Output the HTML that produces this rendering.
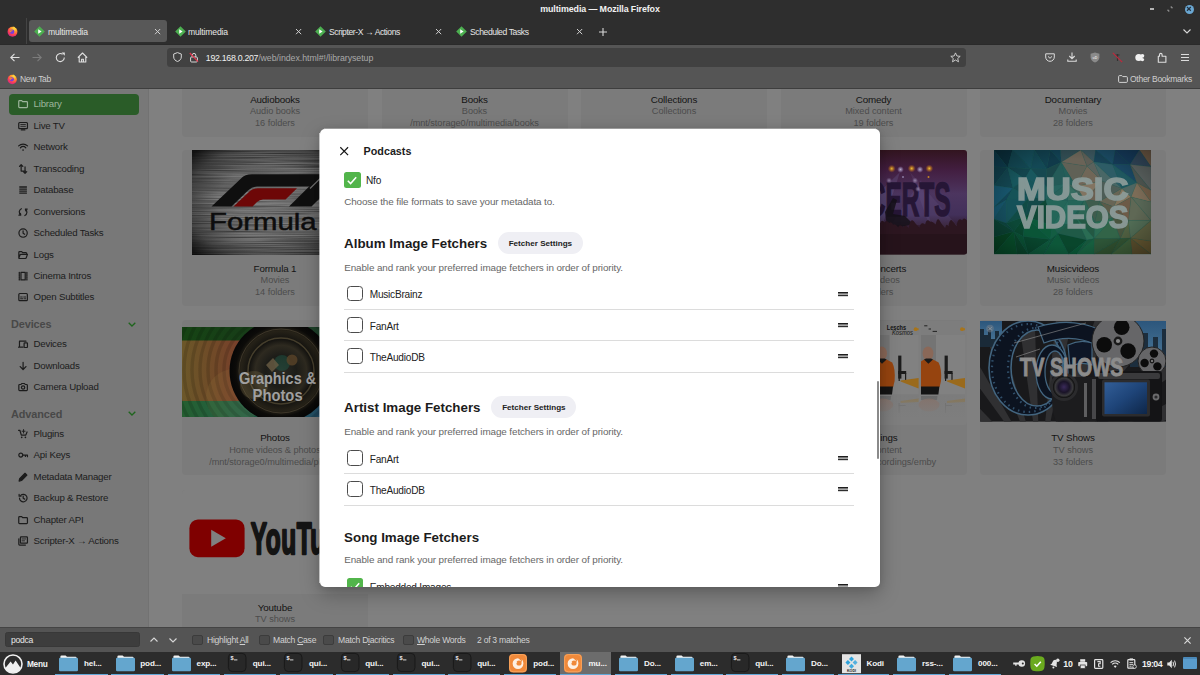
<!DOCTYPE html>
<html lang="en">
<head>
<meta charset="utf-8">
<title>multimedia — Mozilla Firefox</title>
<style>
*{box-sizing:border-box;margin:0;padding:0}
html,body{width:1200px;height:675px;overflow:hidden;background:#808080}
body{font-family:"Liberation Sans",sans-serif;position:relative;color:#fff}
.abs{position:absolute}
svg{position:absolute;overflow:visible}
/* ---------- browser chrome ---------- */
#titlebar{left:0;top:0;width:1200px;height:45px;background:#2e2e2e;border-bottom:1px solid #2a2a2a}
#title{left:0;top:3px;width:1200px;text-align:center;font-size:8.9px;letter-spacing:-0.1px;font-weight:bold;color:#f2f2f2;line-height:12px}
.tab{top:20px;height:23px;border-radius:4px;font-size:9px;line-height:23px;color:#e4e4e4}
.tab span{position:absolute;left:18px;top:0;white-space:nowrap}
#tab1{left:29px;width:138.3px;background:#585858;height:22px;border-radius:3px}
#navbar{left:0;top:45px;width:1200px;height:43.8px;background:#555}
#urlbar{left:167.3px;top:47.6px;width:799px;height:19.6px;border-radius:3.5px;background:#414141}
#url{left:205.8px;top:51.8px;font-size:8.8px;letter-spacing:-0.04px;line-height:13px;color:#a9a9a9;white-space:nowrap}
#url b{font-weight:normal;color:#f0f0f0;letter-spacing:-0.3px}
.bm{top:73.3px;font-size:8.5px;letter-spacing:-0.27px;line-height:12px;color:#cfcfcf;white-space:nowrap}
#chromeline{left:0;top:87.7px;width:1200px;height:1.1px;background:#3e3e3e}
/* ---------- page ---------- */
#sidebar{left:0;top:88px;width:148.6px;height:540px;background:#787878}
#sideborder{left:148px;top:88px;width:1px;height:540px;background:#727272}
#libsel{left:9px;top:94px;width:130px;height:21px;border-radius:4px;background:#2a5c28}
.nav{left:33.6px;font-size:9.7px;letter-spacing:-0.22px;line-height:14px;color:#1c1c1c;white-space:nowrap}
.navh{left:11px;font-size:10.9px;font-weight:bold;line-height:14px;color:#484848;white-space:nowrap;letter-spacing:-0.1px}
.card{background:#7b7b7b;border-radius:4px}
.ct{font-size:9.8px;letter-spacing:-0.15px;line-height:13px;color:#141414;text-align:center;white-space:nowrap;width:186px}
.cs{font-size:9.2px;letter-spacing:-0.05px;line-height:12px;color:#4c4c4c;text-align:center;white-space:nowrap;width:186px}
/* ---------- modal ---------- */
#modal{left:320px;top:129px;width:560px;height:458px;background:#fff;border-radius:5px;box-shadow:0 7px 20px rgba(0,0,0,.27),0 1px 6px rgba(0,0,0,.1);overflow:hidden;color:#1b1b1b}
.h2{margin-top:0.6px;left:24.1px;font-size:13.35px;font-weight:bold;line-height:18px;color:#1c1c1c;white-space:nowrap}
.pill{margin-left:0.4px;margin-top:0.2px;padding-top:0.9px;height:22px;width:85px;border-radius:11px;background:#efeff4;font-size:8.1px;font-weight:bold;line-height:22px;text-align:center;color:#222}
.desc{margin-top:-0.15px;left:24.2px;font-size:9.9px;letter-spacing:-0.105px;line-height:13px;color:#666;white-space:nowrap}
.cb{left:27.1px;width:15.8px;height:15.8px;border:1.4px solid #4c4c4c;border-radius:3.5px;background:#fff}
.lbl{margin-top:0.25px;left:49.7px;font-size:10.1px;letter-spacing:-0.22px;line-height:13px;color:#222;white-space:nowrap}
.sep{left:24.1px;width:510px;height:1px;background:#dcdcdc}
.hdl{left:518.6px;margin-top:0.4px;width:10px;height:4.5px;border-top:1.3px solid #1a1a1a;border-bottom:1.3px solid #555}
/* ---------- find bar + panel ---------- */
#findbar{left:0;top:627px;width:1200px;height:26px;background:#545454;border-top:1px solid #444}
#findinput{left:5px;top:632px;width:134.6px;height:15.4px;border-radius:2.5px;background:#3d3d3d;border:1px solid #383838}
.ft{top:634px;font-size:8.6px;letter-spacing:-0.27px;line-height:12px;color:#d2d2d2;white-space:nowrap}
.fcb{top:635.2px;width:10.4px;height:9.8px;border:1px solid #3c3c3c;background:#4a4a4a;border-radius:2px;margin-left:-0.6px}
#panel{left:0;top:652.2px;width:1200px;height:23px;background:#2c2c2c}
.tk{top:0;height:22.8px;width:52.5px}
.tk i{position:absolute;left:0;bottom:0;width:52.5px;height:1.4px;background:#62a8d8}
.tk span{position:absolute;left:29px;top:5.7px;font-size:8.1px;font-weight:bold;line-height:12px;color:#f4f4f4;white-space:nowrap;letter-spacing:-0.12px}
</style>
</head>
<body>
<!-- PAGE BACKGROUND CONTENT -->
<div id="page">
<!-- row 1 -->
<div class="abs card" style="left:182.0px;top:40px;width:186px;height:96.9px"></div>
<div class="abs ct" style="left:182.0px;top:92.5px">Audiobooks</div>
<div class="abs cs" style="left:182.0px;top:105px">Audio books</div>
<div class="abs cs" style="left:182.0px;top:117px">16 folders</div>
<div class="abs card" style="left:381.5px;top:40px;width:186px;height:96.9px"></div>
<div class="abs ct" style="left:381.5px;top:92.5px">Books</div>
<div class="abs cs" style="left:381.5px;top:105px">Books</div>
<div class="abs cs" style="left:381.5px;top:117px">/mnt/storage0/multimedia/books</div>
<div class="abs card" style="left:581.0px;top:40px;width:186px;height:96.9px"></div>
<div class="abs ct" style="left:581.0px;top:92.5px">Collections</div>
<div class="abs cs" style="left:581.0px;top:105px">Collections</div>
<div class="abs card" style="left:780.5px;top:40px;width:186px;height:96.9px"></div>
<div class="abs ct" style="left:780.5px;top:92.5px">Comedy</div>
<div class="abs cs" style="left:780.5px;top:105px">Mixed content</div>
<div class="abs cs" style="left:780.5px;top:117px">19 folders</div>
<div class="abs card" style="left:980.0px;top:40px;width:186px;height:96.9px"></div>
<div class="abs ct" style="left:980.0px;top:92.5px">Documentary</div>
<div class="abs cs" style="left:980.0px;top:105px">Movies</div>
<div class="abs cs" style="left:980.0px;top:117px">28 folders</div>
<!-- row 2 -->
<div class="abs card" style="left:182.0px;top:149.5px;width:186px;height:156.5px"></div>
<div class="abs ct" style="left:182.0px;top:261.5px">Formula 1</div>
<div class="abs cs" style="left:182.0px;top:274px">Movies</div>
<div class="abs cs" style="left:182.0px;top:286px">14 folders</div>
<div class="abs card" style="left:381.5px;top:149.5px;width:186px;height:156.5px"></div>
<div class="abs ct" style="left:381.5px;top:261.5px">Movies</div>
<div class="abs cs" style="left:381.5px;top:274px">Movies</div>
<div class="abs cs" style="left:381.5px;top:286px">12 folders</div>
<div class="abs card" style="left:581.0px;top:149.5px;width:186px;height:156.5px"></div>
<div class="abs ct" style="left:581.0px;top:261.5px">Music</div>
<div class="abs cs" style="left:581.0px;top:274px">Music</div>
<div class="abs cs" style="left:581.0px;top:286px">9 folders</div>
<div class="abs card" style="left:780.5px;top:149.5px;width:186px;height:156.5px"></div>
<div class="abs ct" style="left:780.5px;top:261.5px">Music Concerts</div>
<div class="abs cs" style="left:780.5px;top:274px">Music videos</div>
<div class="abs cs" style="left:780.5px;top:286px">21 folders</div>
<div class="abs card" style="left:980.0px;top:149.5px;width:186px;height:156.5px"></div>
<div class="abs ct" style="left:980.0px;top:261.5px">Musicvideos</div>
<div class="abs cs" style="left:980.0px;top:274px">Music videos</div>
<div class="abs cs" style="left:980.0px;top:286px">28 folders</div>
<!-- Formula 1 thumbnail -->
<svg class="abs" style="left:192px;top:150px" width="157" height="105" viewBox="0 0 157 105">
<defs>
<radialGradient id="f1bg" cx="0.5" cy="0.5" r="0.68"><stop offset="0" stop-color="#868686"/><stop offset="0.5" stop-color="#777"/><stop offset="0.8" stop-color="#4a4a4a"/><stop offset="1" stop-color="#151515"/></radialGradient>
<filter id="f1tx" x="0" y="0" width="100%" height="100%"><feTurbulence type="fractalNoise" baseFrequency="0.012 0.9" numOctaves="2" seed="4" result="n"/><feColorMatrix type="matrix" values="0 0 0 0 0  0 0 0 0 0  0 0 0 0 0  0.9 0 0 0 -0.28"/></filter>
<clipPath id="f1clip"><rect width="157" height="105"/></clipPath>
</defs>
<g clip-path="url(#f1clip)">
<rect width="157" height="105" fill="url(#f1bg)"/>
<rect width="157" height="105" filter="url(#f1tx)"/>
<!-- F1 logo -->
<path d="M19.5 56.5 L49 28.5 Q53 24.3 60 24.3 L133 24.3 L121 36.5 L65 36.5 Q60 36.5 56 40.5 L39.5 56.5Z" fill="#0f0f0f"/>
<path d="M41.5 56.5 L58 41 Q61 38.3 66 38.3 L105 38.3 L93.5 49.5 L71 49.5 Q67.5 49.5 65 52 L60.5 56.5Z" fill="#6d0707"/>
<path d="M97 56.5 L129.5 24.3 L152 24.3 L119.5 56.5Z" fill="#0f0f0f"/>
<path d="M118 38.5 L128 28.6" stroke="#707070" stroke-width="1.2"/>
<text x="17" y="79.6" font-family="Liberation Sans,sans-serif" font-size="24.5" fill="#0d0d0d" stroke="#0d0d0d" stroke-width="0.5" textLength="132" lengthAdjust="spacingAndGlyphs">Formula 1</text>
</g>
</svg>
<!-- Concerts thumbnail -->
<svg class="abs" style="left:781px;top:150px" width="186" height="104.5" viewBox="0 0 186 104.5">
<defs>
<linearGradient id="cobg" x1="0" y1="0" x2="0" y2="1"><stop offset="0" stop-color="#32141f"/><stop offset="0.2" stop-color="#431f42"/><stop offset="0.42" stop-color="#4c355f"/><stop offset="0.62" stop-color="#42305a"/><stop offset="0.72" stop-color="#331e34"/><stop offset="1" stop-color="#211018"/></linearGradient>
<radialGradient id="coy"><stop offset="0" stop-color="#f0c040"/><stop offset="0.4" stop-color="#c08020" stop-opacity="0.8"/><stop offset="1" stop-color="#a05020" stop-opacity="0"/></radialGradient>
<radialGradient id="cow"><stop offset="0" stop-color="#b8a8c8"/><stop offset="0.5" stop-color="#9080a8" stop-opacity="0.7"/><stop offset="1" stop-color="#806090" stop-opacity="0"/></radialGradient>
<clipPath id="coclip"><rect width="186" height="104.5" rx="3"/></clipPath>
</defs>
<g clip-path="url(#coclip)">
<rect width="186" height="104.5" fill="url(#cobg)"/>
<path d="M119 22 L60 80 L100 80Z" fill="#8a88c0" fill-opacity="0.18"/>
<path d="M129 22 L150 80 L180 80Z" fill="#8a78b0" fill-opacity="0.12"/>
<path d="M140 30 L110 75 L150 75Z" fill="#7a6ab0" fill-opacity="0.15"/>
<text x="169.5" y="66.3" text-anchor="end" font-family="Liberation Sans,sans-serif" font-weight="bold" font-size="48" fill="#261636" stroke="#261636" stroke-width="1.6" fill-opacity="1" textLength="137" lengthAdjust="spacingAndGlyphs">CONCERTS</text>
<g>
<circle cx="110.7" cy="18.7" r="4" fill="url(#coy)"/><circle cx="130.7" cy="18.5" r="4" fill="url(#coy)"/><circle cx="148.3" cy="18.5" r="4" fill="url(#coy)"/>
<circle cx="119.5" cy="19.5" r="3.4" fill="url(#cow)"/><circle cx="139" cy="19.5" r="3.4" fill="url(#cow)"/>
<circle cx="108" cy="30.5" r="3" fill="url(#cow)" opacity="0.7"/><circle cx="134" cy="30.5" r="3" fill="url(#cow)" opacity="0.7"/><circle cx="137" cy="39" r="3" fill="url(#cow)" opacity="0.7"/>
<circle cx="147.5" cy="27" r="1.6" fill="url(#coy)"/><circle cx="122" cy="27" r="1.4" fill="url(#cow)"/>
<circle cx="30" cy="18.7" r="4" fill="url(#coy)"/><circle cx="50" cy="18.5" r="4" fill="url(#coy)"/><circle cx="70" cy="18.5" r="4" fill="url(#coy)"/><circle cx="90" cy="19" r="3.4" fill="url(#cow)"/>
</g>
<path d="M104 62 L112 48 L116 50 L112 64 L124 66 L132 74 L116 78 L106 76Z" fill="#151018" fill-opacity="0.85"/>
<path d="M0 105 L0 76 Q1.5 70.4 3.7 74.4 Q5.2 70.8 7.8 74.8 Q9.3 66.5 12.7 70.5 Q14.2 72.7 15.7 76.7 Q17.2 67.9 19.5 71.9 Q21.0 69.8 25.5 73.8 Q27.0 69.8 31.0 73.8 Q32.5 67.2 35.9 71.2 Q37.4 72.9 40.8 76.9 Q42.3 71.9 45.4 75.9 Q46.9 66.5 50.4 70.5 Q51.9 70.7 55.7 74.7 Q57.2 66.2 59.6 70.2 Q61.1 69.8 65.2 73.8 Q66.7 73.0 70.4 77.0 Q71.9 73.4 75.5 77.4 Q77.0 72.4 79.7 76.4 Q81.2 73.5 84.0 77.5 Q85.5 66.8 89.6 70.8 Q91.1 67.7 93.1 71.7 Q94.6 69.5 99.0 73.5 Q100.5 68.4 103.8 72.4 Q105.3 69.1 108.4 73.1 Q109.9 70.7 112.4 74.7 Q113.9 73.2 117.2 77.2 Q118.7 73.4 122.2 77.4 Q123.7 73.9 127.8 77.9 Q129.3 67.3 132.8 71.3 Q134.3 73.7 138.4 77.7 Q139.9 70.6 144.1 74.6 Q145.6 67.7 149.2 71.7 Q150.7 70.6 154.7 74.6 Q156.2 66.5 158.6 70.5 Q160.1 73.9 164.1 77.9 Q165.6 72.4 167.4 76.4 Q168.9 67.2 171.6 71.2 Q173.1 72.2 175.5 76.2 Q177.0 66.4 181.1 70.4 Q182.6 66.4 186.0 70.4 Q187.5 68.6 191.1 72.6 L186 105Z" fill="#2c1620"/>
<rect y="84" width="186" height="21" fill="#1a0c12" fill-opacity="0.3"/>
</g>
</svg>
<!-- Musicvideos thumbnail -->
<svg class="abs" style="left:994.3px;top:150.2px" width="157" height="104.3" viewBox="0 0 157 104.3">
<defs><clipPath id="mvclip"><rect width="157" height="104.3"/></clipPath>
<radialGradient id="mvvig" cx="0.5" cy="0.5" r="0.75"><stop offset="0.55" stop-color="#000" stop-opacity="0"/><stop offset="1" stop-color="#000" stop-opacity="0.4"/></radialGradient></defs>
<g clip-path="url(#mvclip)">
<rect width="157" height="104.3" fill="#1a6a5a"/>
<g stroke-width="0.4" stroke="#2a6a64" stroke-opacity="0.3">
<path d="M0.0 0.0L18.5 0.0L13.7 17.5Z" fill="#0d3949"/><path d="M0.0 0.0L13.7 17.5L0.0 16.8Z" fill="#10465a"/><path d="M0.0 16.8L13.7 17.5L0.0 35.5Z" fill="#134756"/><path d="M13.7 17.5L19.0 38.3L0.0 35.5Z" fill="#164f5c"/><path d="M0.0 35.5L19.0 38.3L0.0 57.2Z" fill="#1b607a"/><path d="M19.0 38.3L12.6 49.8L0.0 57.2Z" fill="#164f63"/><path d="M0.0 57.2L12.6 49.8L0.0 69.1Z" fill="#1a5f79"/><path d="M12.6 49.8L12.5 73.2L0.0 69.1Z" fill="#18596c"/><path d="M0.0 69.1L12.5 73.2L19.8 81.4Z" fill="#104e47"/><path d="M0.0 69.1L19.8 81.4L0.0 87.0Z" fill="#0d4b3b"/><path d="M0.0 87.0L19.8 81.4L0.0 104.3Z" fill="#084e2a"/><path d="M19.8 81.4L23.2 104.3L0.0 104.3Z" fill="#095931"/><path d="M18.5 0.0L40.5 0.0L36.7 18.8Z" fill="#185968"/><path d="M18.5 0.0L36.7 18.8L13.7 17.5Z" fill="#165260"/><path d="M13.7 17.5L36.7 18.8L30.8 28.9Z" fill="#164e58"/><path d="M13.7 17.5L30.8 28.9L19.0 38.3Z" fill="#1b6169"/><path d="M19.0 38.3L30.8 28.9L35.2 46.9Z" fill="#18565c"/><path d="M19.0 38.3L35.2 46.9L12.6 49.8Z" fill="#1a5f65"/><path d="M12.6 49.8L35.2 46.9L12.5 73.2Z" fill="#195d66"/><path d="M35.2 46.9L31.2 66.4L12.5 73.2Z" fill="#13564f"/><path d="M12.5 73.2L31.2 66.4L19.8 81.4Z" fill="#0e533f"/><path d="M31.2 66.4L29.2 86.5L19.8 81.4Z" fill="#0b4f35"/><path d="M19.8 81.4L29.2 86.5L34.2 104.3Z" fill="#0c5a3b"/><path d="M19.8 81.4L34.2 104.3L23.2 104.3Z" fill="#0b4e32"/><path d="M40.5 0.0L56.4 0.0L52.6 19.1Z" fill="#144959"/><path d="M40.5 0.0L52.6 19.1L36.7 18.8Z" fill="#165361"/><path d="M36.7 18.8L52.6 19.1L52.3 36.7Z" fill="#1a535c"/><path d="M36.7 18.8L52.3 36.7L30.8 28.9Z" fill="#1d636c"/><path d="M30.8 28.9L52.3 36.7L35.2 46.9Z" fill="#1b6168"/><path d="M52.3 36.7L51.8 49.5L35.2 46.9Z" fill="#1f6466"/><path d="M35.2 46.9L51.8 49.5L31.2 66.4Z" fill="#175454"/><path d="M51.8 49.5L58.3 75.5L31.2 66.4Z" fill="#11523d"/><path d="M31.2 66.4L58.3 75.5L56.4 89.4Z" fill="#0e6643"/><path d="M31.2 66.4L56.4 89.4L29.2 86.5Z" fill="#0c613f"/><path d="M29.2 86.5L56.4 89.4L34.2 104.3Z" fill="#0a4f34"/><path d="M56.4 89.4L50.1 104.3L34.2 104.3Z" fill="#0f6040"/><path d="M56.4 0.0L66.5 0.0L67.2 12.2Z" fill="#154a5f"/><path d="M56.4 0.0L67.2 12.2L52.6 19.1Z" fill="#134355"/><path d="M52.6 19.1L67.2 12.2L52.3 36.7Z" fill="#1f5155"/><path d="M67.2 12.2L73.0 33.6L52.3 36.7Z" fill="#296865"/><path d="M52.3 36.7L73.0 33.6L51.8 49.5Z" fill="#2d726d"/><path d="M73.0 33.6L73.9 50.8L51.8 49.5Z" fill="#2e7068"/><path d="M51.8 49.5L73.9 50.8L58.3 75.5Z" fill="#2a7566"/><path d="M73.9 50.8L75.3 73.7L58.3 75.5Z" fill="#2c7a6a"/><path d="M58.3 75.5L75.3 73.7L63.8 83.4Z" fill="#226c57"/><path d="M58.3 75.5L63.8 83.4L56.4 89.4Z" fill="#166a4c"/><path d="M56.4 89.4L63.8 83.4L50.1 104.3Z" fill="#105b3e"/><path d="M63.8 83.4L74.7 104.3L50.1 104.3Z" fill="#0f6341"/><path d="M66.5 0.0L86.9 0.0L67.2 12.2Z" fill="#38575e"/><path d="M86.9 0.0L93.0 16.2L67.2 12.2Z" fill="#797163"/><path d="M67.2 12.2L93.0 16.2L82.1 36.3Z" fill="#6e6f62"/><path d="M67.2 12.2L82.1 36.3L73.0 33.6Z" fill="#2b6b66"/><path d="M73.0 33.6L82.1 36.3L90.6 49.4Z" fill="#477066"/><path d="M73.0 33.6L90.6 49.4L73.9 50.8Z" fill="#3d7b6e"/><path d="M73.9 50.8L90.6 49.4L75.3 73.7Z" fill="#2a7466"/><path d="M90.6 49.4L82.3 67.5L75.3 73.7Z" fill="#276a5c"/><path d="M75.3 73.7L82.3 67.5L63.8 83.4Z" fill="#286e5d"/><path d="M82.3 67.5L92.8 90.0L63.8 83.4Z" fill="#246751"/><path d="M63.8 83.4L92.8 90.0L74.7 104.3Z" fill="#0b5033"/><path d="M92.8 90.0L82.6 104.3L74.7 104.3Z" fill="#0b603c"/><path d="M86.9 0.0L101.6 0.0L99.9 12.1Z" fill="#43616a"/><path d="M86.9 0.0L99.9 12.1L93.0 16.2Z" fill="#6a6a61"/><path d="M93.0 16.2L99.9 12.1L108.2 30.9Z" fill="#67706a"/><path d="M93.0 16.2L108.2 30.9L82.1 36.3Z" fill="#807563"/><path d="M82.1 36.3L108.2 30.9L90.6 49.4Z" fill="#94856f"/><path d="M108.2 30.9L105.4 51.5L90.6 49.4Z" fill="#7a6e5d"/><path d="M90.6 49.4L105.4 51.5L101.0 72.3Z" fill="#486958"/><path d="M90.6 49.4L101.0 72.3L82.3 67.5Z" fill="#337360"/><path d="M82.3 67.5L101.0 72.3L100.2 88.6Z" fill="#28654d"/><path d="M82.3 67.5L100.2 88.6L92.8 90.0Z" fill="#307c5f"/><path d="M92.8 90.0L100.2 88.6L82.6 104.3Z" fill="#1b6244"/><path d="M100.2 88.6L100.1 104.3L82.6 104.3Z" fill="#1a6b47"/><path d="M101.6 0.0L121.2 0.0L118.7 14.6Z" fill="#1f5773"/><path d="M101.6 0.0L118.7 14.6L99.9 12.1Z" fill="#1c4d64"/><path d="M99.9 12.1L118.7 14.6L127.8 38.4Z" fill="#346975"/><path d="M99.9 12.1L127.8 38.4L108.2 30.9Z" fill="#547675"/><path d="M108.2 30.9L127.8 38.4L105.4 51.5Z" fill="#586a63"/><path d="M127.8 38.4L119.8 56.8L105.4 51.5Z" fill="#777461"/><path d="M105.4 51.5L119.8 56.8L118.6 68.3Z" fill="#686753"/><path d="M105.4 51.5L118.6 68.3L101.0 72.3Z" fill="#476f58"/><path d="M101.0 72.3L118.6 68.3L100.2 88.6Z" fill="#317a5e"/><path d="M118.6 68.3L126.4 88.6L100.2 88.6Z" fill="#397253"/><path d="M100.2 88.6L126.4 88.6L100.1 104.3Z" fill="#34603f"/><path d="M126.4 88.6L117.3 104.3L100.1 104.3Z" fill="#365a36"/><path d="M121.2 0.0L145.4 0.0L136.1 14.5Z" fill="#194268"/><path d="M121.2 0.0L136.1 14.5L118.7 14.6Z" fill="#1a4566"/><path d="M118.7 14.6L136.1 14.5L142.8 32.7Z" fill="#1f5272"/><path d="M118.7 14.6L142.8 32.7L127.8 38.4Z" fill="#24636d"/><path d="M127.8 38.4L142.8 32.7L137.1 47.0Z" fill="#597570"/><path d="M127.8 38.4L137.1 47.0L119.8 56.8Z" fill="#978469"/><path d="M119.8 56.8L137.1 47.0L134.6 70.5Z" fill="#7b6751"/><path d="M119.8 56.8L134.6 70.5L118.6 68.3Z" fill="#72654f"/><path d="M118.6 68.3L134.6 70.5L126.4 88.6Z" fill="#536047"/><path d="M134.6 70.5L136.5 88.1L126.4 88.6Z" fill="#5d6f4c"/><path d="M126.4 88.6L136.5 88.1L117.3 104.3Z" fill="#3a5f39"/><path d="M136.5 88.1L138.0 104.3L117.3 104.3Z" fill="#476c41"/><path d="M145.4 0.0L157.0 0.0L157.0 16.8Z" fill="#836a53"/><path d="M145.4 0.0L157.0 16.8L136.1 14.5Z" fill="#395369"/><path d="M136.1 14.5L157.0 16.8L157.0 40.3Z" fill="#69716f"/><path d="M136.1 14.5L157.0 40.3L142.8 32.7Z" fill="#5b635e"/><path d="M142.8 32.7L157.0 40.3L157.0 52.0Z" fill="#826c53"/><path d="M142.8 32.7L157.0 52.0L137.1 47.0Z" fill="#8e7c63"/><path d="M137.1 47.0L157.0 52.0L157.0 70.4Z" fill="#657662"/><path d="M137.1 47.0L157.0 70.4L134.6 70.5Z" fill="#6d7761"/><path d="M134.6 70.5L157.0 70.4L136.5 88.1Z" fill="#5d7b61"/><path d="M157.0 70.4L157.0 91.3L136.5 88.1Z" fill="#6b6f4a"/><path d="M136.5 88.1L157.0 91.3L157.0 104.3Z" fill="#77673b"/><path d="M136.5 88.1L157.0 104.3L138.0 104.3Z" fill="#6b5e36"/>
</g>
<rect width="157" height="104.3" fill="#000" fill-opacity="0.12"/><rect width="157" height="104.3" fill="url(#mvvig)"/>
<g font-family="Liberation Sans,sans-serif" font-weight="bold" font-size="31.6" fill="#8c9c9a" stroke="#8c9c9a" stroke-width="1.6" stroke-linejoin="miter" opacity="0.93">
<text x="23" y="49.8" textLength="111.5" lengthAdjust="spacingAndGlyphs">MUSIC</text>
<text x="23" y="77.6" textLength="111.5" lengthAdjust="spacingAndGlyphs">VIDEOS</text>
</g>
</g>
</svg>
<!-- row 3 -->
<div class="abs card" style="left:182.0px;top:320px;width:186px;height:155px"></div>
<div class="abs ct" style="left:182.0px;top:431.0px">Photos</div>
<div class="abs cs" style="left:182.0px;top:443.5px">Home videos &amp; photos</div>
<div class="abs cs" style="left:182.0px;top:455.5px">/mnt/storage0/multimedia/photos</div>
<div class="abs card" style="left:381.5px;top:320px;width:186px;height:155px"></div>
<div class="abs ct" style="left:381.5px;top:431.0px">Podcasts</div>
<div class="abs cs" style="left:381.5px;top:443.5px">Music</div>
<div class="abs cs" style="left:381.5px;top:455.5px">3 folders</div>
<div class="abs card" style="left:581.0px;top:320px;width:186px;height:155px"></div>
<div class="abs ct" style="left:581.0px;top:431.0px">Radio</div>
<div class="abs cs" style="left:581.0px;top:443.5px">Music</div>
<div class="abs cs" style="left:581.0px;top:455.5px">2 folders</div>
<div class="abs card" style="left:780.5px;top:320px;width:186px;height:155px"></div>
<div class="abs ct" style="left:780.5px;top:431.0px">Recordings</div>
<div class="abs cs" style="left:780.5px;top:443.5px">Mixed content</div>
<div class="abs cs" style="left:780.5px;top:455.5px">/mnt/storage0/recordings/emby</div>
<div class="abs card" style="left:980.0px;top:320px;width:186px;height:155px"></div>
<div class="abs ct" style="left:980.0px;top:431.0px">TV Shows</div>
<div class="abs cs" style="left:980.0px;top:443.5px">TV shows</div>
<div class="abs cs" style="left:980.0px;top:455.5px">33 folders</div>
<!-- Photos thumbnail -->
<svg class="abs" style="left:182px;top:327px" width="186" height="90" viewBox="0 0 186 90">
<defs>
<linearGradient id="phor" x1="0" x2="1"><stop offset="0" stop-color="#7c6530"/><stop offset="0.14" stop-color="#80582e"/><stop offset="0.3" stop-color="#8a4a32"/><stop offset="1" stop-color="#5a2a38"/></linearGradient>
<linearGradient id="phgr" x1="0" x2="1"><stop offset="0" stop-color="#1a4e18"/><stop offset="0.5" stop-color="#1c441e"/><stop offset="1" stop-color="#2a5246"/></linearGradient>
<linearGradient id="phbt" x1="0" x2="1"><stop offset="0" stop-color="#2a6e38"/><stop offset="0.4" stop-color="#2a7058"/><stop offset="0.75" stop-color="#2a5a7a"/><stop offset="1" stop-color="#5a2a6a"/></linearGradient>
<radialGradient id="phlens" cx="0.5" cy="0.5" r="0.5"><stop offset="0" stop-color="#2a2a24"/><stop offset="0.3" stop-color="#1c1c18"/><stop offset="0.5" stop-color="#2e2a20"/><stop offset="0.62" stop-color="#141310"/><stop offset="0.78" stop-color="#262218"/><stop offset="0.88" stop-color="#0c0b09"/><stop offset="1" stop-color="#060606"/></radialGradient>
<radialGradient id="phrings" cx="94" cy="43" r="120" gradientUnits="userSpaceOnUse" spreadMethod="repeat" fx="94" fy="43"><stop offset="0" stop-color="#000" stop-opacity="0"/><stop offset="0.05" stop-color="#000" stop-opacity="0.22"/><stop offset="0.1" stop-color="#000" stop-opacity="0"/></radialGradient>
<clipPath id="phclip"><rect width="186" height="90"/></clipPath>
</defs>
<g clip-path="url(#phclip)">
<rect width="186" height="90" fill="url(#phor)"/>
<rect width="186" height="13.5" fill="url(#phgr)"/>
<rect y="74" width="186" height="16" fill="url(#phbt)"/>
<g fill="none" stroke="#000" stroke-opacity="0.13" stroke-width="3.5">
<circle cx="94" cy="43" r="52"/><circle cx="94" cy="43" r="60"/><circle cx="94" cy="43" r="68"/><circle cx="94" cy="43" r="76"/><circle cx="94" cy="43" r="84"/><circle cx="94" cy="43" r="92"/><circle cx="94" cy="43" r="100"/>
</g>
<rect width="186" height="90" fill="#000" fill-opacity="0.13"/><circle cx="52" cy="70" r="28" fill="#b0a050" fill-opacity="0.1"/>
<circle cx="99" cy="44" r="51.5" fill="url(#phlens)"/>
<circle cx="99" cy="44" r="33" fill="none" stroke="#5a5038" stroke-width="1.5" stroke-opacity="0.7"/>
<circle cx="99" cy="44" r="42" fill="none" stroke="#4a4232" stroke-width="1" stroke-opacity="0.7"/>
<circle cx="100" cy="36" r="8" fill="#1f5a4a" fill-opacity="0.45"/>
<circle cx="110" cy="33" r="5.5" fill="#5a4428" fill-opacity="0.8"/>
<path d="M84 38L91 31L97 38L90 45Z" fill="#6a5c44" fill-opacity="0.8"/>
<circle cx="72" cy="58" r="14" fill="#8a7a50" fill-opacity="0.25"/>
<text x="95.6" y="57.4" text-anchor="middle" font-family="Liberation Sans,sans-serif" font-weight="bold" font-size="17" fill="#a0a0a0" textLength="77" lengthAdjust="spacingAndGlyphs">Graphics &amp;</text>
<text x="95.6" y="74.2" text-anchor="middle" font-family="Liberation Sans,sans-serif" font-weight="bold" font-size="17" fill="#a0a0a0" textLength="50" lengthAdjust="spacingAndGlyphs">Photos</text>
</g>
</svg>
<!-- TV Shows thumbnail -->
<svg class="abs" style="left:980px;top:321.2px" width="186" height="100.8" viewBox="0 0 186 100.8">
<defs><clipPath id="tvclip"><rect width="186" height="100.8"/></clipPath>
<linearGradient id="tvlcd" x1="0" y1="0" x2="1" y2="1"><stop offset="0" stop-color="#325e98"/><stop offset="0.5" stop-color="#1e4478"/><stop offset="1" stop-color="#0e2648"/></linearGradient>
<linearGradient id="tvsky" x1="0" y1="0" x2="0" y2="1"><stop offset="0" stop-color="#2c567c"/><stop offset="1" stop-color="#4f7c9c"/></linearGradient>
<radialGradient id="tvlens"><stop offset="0" stop-color="#3a2a5a"/><stop offset="0.5" stop-color="#1a1428"/><stop offset="0.8" stop-color="#3a3a3c"/><stop offset="1" stop-color="#0a0a0a"/></radialGradient>
</defs>
<g clip-path="url(#tvclip)">
<rect width="186" height="100.8" fill="#19191b"/>
<path d="M60 150L317.5 113.8L312.3 87.1Z" fill="#303032"/><path d="M60 150L301.1 52.6L289.6 27.9Z" fill="#303032"/><path d="M60 150L270.3 -2.8L253.2 -24.0Z" fill="#303032"/><path d="M60 150L227.1 -49.2L205.4 -65.5Z" fill="#303032"/><path d="M60 150L174.0 -83.7L148.9 -94.3Z" fill="#303032"/><path d="M60 150L114.1 -104.3L87.2 -108.6Z" fill="#303032"/><path d="M60 150L50.9 -109.8L23.8 -107.5Z" fill="#303032"/><path d="M60 150L-11.7 -99.9L-37.4 -91.1Z" fill="#303032"/><path d="M60 150L-70.0 -75.2L-92.8 -60.3Z" fill="#303032"/><path d="M60 150L-120.6 -37.0L-139.2 -17.1Z" fill="#303032"/><path d="M60 150L-160.5 12.2L-173.7 36.0Z" fill="#303032"/><path d="M60 150L-187.3 69.7L-194.3 95.9Z" fill="#303032"/>
<rect x="0" y="0" width="22" height="26" fill="url(#tvsky)"/>
<path d="M0 26V8H4V14H8V6H11V18H15V10H19V22H22V26Z" fill="#1a2a38"/>
<rect x="150" y="0" width="36" height="46" fill="url(#tvsky)"/>
<path d="M150 46V4H158V20H163V12H168V26H173V16H178V30H182V8H186V46Z" fill="#1c2e3e"/>
<!-- big film ring -->
<path fill-rule="evenodd" d="M48 0A39 47 0 1 0 48 94A39 47 0 1 0 48 0ZM57 9A26 38 0 1 1 57 85A26 38 0 1 1 57 9Z" fill="#0c1320" stroke="#43657f" stroke-width="1.6"/>
<path fill-rule="evenodd" d="M48 3A36 44 0 1 0 48 91A36 44 0 1 0 48 3ZM55 7A27 40 0 1 1 55 87A27 40 0 1 1 55 7Z" fill="none" stroke="#3a5e7c" stroke-width="2.2" stroke-dasharray="1.5 4" stroke-opacity="0.8"/>
<!-- small ring -->
<path fill-rule="evenodd" d="M72 24A16 27 0 1 0 72 78A16 27 0 1 0 72 24ZM75 30A10 21 0 1 1 75 72A10 21 0 1 1 75 30Z" fill="#0c1320" stroke="#43657f" stroke-width="1.3"/>
<!-- film strip going right -->
<path d="M58 6 Q90 -4 118 8 L116 24 Q92 12 64 22Z" fill="#0c1320" stroke="#43657f" stroke-width="1.2"/>
<path d="M88 24 Q100 18 112 22 L112 44 Q100 40 90 46Z" fill="#0e1626" stroke="#43657f" stroke-width="1.2"/>
<path d="M34 22L106 2M36 36L60 28" stroke="#9a9a9a" stroke-width="0.8" opacity="0.7"/>
<circle cx="138" cy="20" r="26" fill="#666668"/><circle cx="138" cy="20" r="26" fill="none" stroke="#222" stroke-width="1"/><circle cx="141.7" cy="6.2" r="7.8" fill="#0c0c0c"/><circle cx="148.1" cy="30.1" r="7.8" fill="#0c0c0c"/><circle cx="124.2" cy="23.7" r="7.8" fill="#0c0c0c"/><circle cx="138" cy="20" r="4.4" fill="#1a1a1a"/><circle cx="138" cy="20" r="2.1" fill="#8a8a8a"/>
<circle cx="172" cy="40" r="14" fill="#666668"/><circle cx="172" cy="40" r="14" fill="none" stroke="#222" stroke-width="1"/><circle cx="174.0" cy="32.6" r="4.2" fill="#0c0c0c"/><circle cx="177.4" cy="45.4" r="4.2" fill="#0c0c0c"/><circle cx="164.6" cy="42.0" r="4.2" fill="#0c0c0c"/><circle cx="172" cy="40" r="2.4" fill="#1a1a1a"/><circle cx="172" cy="40" r="1.1" fill="#8a8a8a"/>
<!-- camera -->
<path d="M72 56H118V100.8H76Q72 90 72 78Z" fill="#1c1c1e"/>
<rect x="116" y="50" width="66" height="50.8" rx="3" fill="#141416"/>
<rect x="118" y="52" width="62" height="6" rx="2" fill="#3a3a3c"/>
<circle cx="84" cy="66" r="14" fill="#2a2a2c"/>
<circle cx="84" cy="66" r="11" fill="url(#tvlens)"/>
<rect x="104" y="62" width="3" height="34" fill="#8a8a8c" opacity="0.6"/>
<rect x="112" y="58" width="4" height="40" fill="#5a5a5c" opacity="0.7"/>
<rect x="122" y="58.5" width="48" height="37" rx="2" fill="#2c2c2e"/>
<rect x="124.5" y="61.3" width="42.5" height="31.7" fill="url(#tvlcd)"/>
<circle cx="176" cy="76" r="3.4" fill="#6a6a6c"/><circle cx="176" cy="76" r="1.6" fill="#2a2a2c"/>
<circle cx="10" cy="7.6" r="3.8" fill="#6a7a88" fill-opacity="0.6"/><path d="M8.3 5.9L11.7 9.3M11.7 5.9L8.3 9.3" stroke="#c0c8d0" stroke-width="0.7" opacity="0.8"/>
<text x="39.7" y="55.3" font-family="Liberation Sans,sans-serif" font-weight="bold" font-size="26.4" fill="#8c8c8c" stroke="#8c8c8c" stroke-width="0.9" textLength="103.6" lengthAdjust="spacingAndGlyphs">TV SHOWS</text>
</g>
</svg>
<!-- Recordings thumbnail -->
<svg class="abs" style="left:781px;top:320.5px" width="186" height="104" viewBox="0 0 186 104">
<defs><clipPath id="leclip"><rect width="186" height="104" rx="3"/></clipPath>
<linearGradient id="lefade" x1="0" y1="0" x2="0" y2="1"><stop offset="0" stop-color="#7e7e7e" stop-opacity="0.25"/><stop offset="1" stop-color="#7e7e7e" stop-opacity="1"/></linearGradient></defs>
<g clip-path="url(#leclip)">
<rect width="186" height="104" fill="#7e7e7e"/>
<g transform="translate(1.6,0)"><rect x="0" y="0" width="44" height="73.4" fill="#7d7d7d"/><rect x="0" y="14" width="15" height="59" fill="#747474"/><rect x="15" y="14" width="29" height="59" fill="#818181"/><rect x="23.6" y="34.6" width="3.2" height="23" fill="#1c1c1c"/><rect x="23.6" y="50" width="8" height="3" fill="#1a1a1a"/><rect x="30.4" y="52" width="1.2" height="7" fill="#1c1c1c"/><rect x="24" y="52" width="1.2" height="8" fill="#1c1c1c"/><path d="M26 59.5L44 57V67.5L26 60.5Z" fill="#9a6a1c"/><ellipse cx="7" cy="32.4" rx="5.4" ry="7" fill="#8a6858"/><path d="M0 40.5L3 38.5H12L17.6 41.5Q21 48 20 60L18.6 66H0Z" fill="#96440f"/><path d="M3 38.6L7.4 42.8L12 38.6L10 37.4H5Z" fill="#1a1a1a"/><path d="M0 65.6H18.4L17.4 73.4H0Z" fill="#141414"/><rect x="0" y="74.4" width="44" height="22" fill="#7b7b7b"/><path d="M0 75H16.5L16 79H0Z" fill="#555" fill-opacity="0.7"/><ellipse cx="8" cy="84" rx="10.5" ry="6.5" fill="#8a6a5c" fill-opacity="0.75"/><path d="M26 80L44 77.5V81L26 82Z" fill="#8c7240" fill-opacity="0.8"/><rect x="24" y="82" width="1" height="10" fill="#666"/><rect x="24" y="84" width="7" height="1" fill="#666"/><circle cx="41" cy="8.2" r="1.9" fill="#a8741a"/><path d="M41 7.2H44V9.2H41Z" fill="#a8741a"/><text x="12.2" y="8.6" font-family="Liberation Sans,sans-serif" font-size="6.8" font-weight="bold" fill="#111" textLength="19.2" lengthAdjust="spacingAndGlyphs">Leschs</text><text x="17.4" y="14.4" font-family="Liberation Sans,sans-serif" font-size="6.6" font-style="italic" fill="#151515" textLength="21" lengthAdjust="spacingAndGlyphs">Kosmos</text></g><g transform="translate(47.6,0)"><rect x="0" y="0" width="44" height="73.4" fill="#7d7d7d"/><rect x="0" y="14" width="15" height="59" fill="#747474"/><rect x="15" y="14" width="29" height="59" fill="#818181"/><rect x="23.6" y="34.6" width="3.2" height="23" fill="#1c1c1c"/><rect x="23.6" y="50" width="8" height="3" fill="#1a1a1a"/><rect x="30.4" y="52" width="1.2" height="7" fill="#1c1c1c"/><rect x="24" y="52" width="1.2" height="8" fill="#1c1c1c"/><path d="M26 59.5L44 57V67.5L26 60.5Z" fill="#9a6a1c"/><ellipse cx="7" cy="32.4" rx="5.4" ry="7" fill="#8a6858"/><path d="M0 40.5L3 38.5H12L17.6 41.5Q21 48 20 60L18.6 66H0Z" fill="#96440f"/><path d="M3 38.6L7.4 42.8L12 38.6L10 37.4H5Z" fill="#1a1a1a"/><path d="M0 65.6H18.4L17.4 73.4H0Z" fill="#141414"/><rect x="0" y="74.4" width="44" height="22" fill="#7b7b7b"/><path d="M0 75H16.5L16 79H0Z" fill="#555" fill-opacity="0.7"/><ellipse cx="8" cy="84" rx="10.5" ry="6.5" fill="#8a6a5c" fill-opacity="0.75"/><path d="M26 80L44 77.5V81L26 82Z" fill="#8c7240" fill-opacity="0.8"/><rect x="24" y="82" width="1" height="10" fill="#666"/><rect x="24" y="84" width="7" height="1" fill="#666"/><circle cx="41" cy="8.2" r="1.9" fill="#a8741a"/><path d="M41 7.2H44V9.2H41Z" fill="#a8741a"/><path d="M3.2 4.8H6.4M7.6 8H10M11.6 10.4H16" stroke="#222" stroke-width="1"/></g><g transform="translate(93.6,0)"><rect x="0" y="0" width="44" height="73.4" fill="#7d7d7d"/><rect x="0" y="14" width="15" height="59" fill="#747474"/><rect x="15" y="14" width="29" height="59" fill="#818181"/><rect x="23.6" y="34.6" width="3.2" height="23" fill="#1c1c1c"/><rect x="23.6" y="50" width="8" height="3" fill="#1a1a1a"/><rect x="30.4" y="52" width="1.2" height="7" fill="#1c1c1c"/><rect x="24" y="52" width="1.2" height="8" fill="#1c1c1c"/><path d="M26 59.5L44 57V67.5L26 60.5Z" fill="#9a6a1c"/><ellipse cx="7" cy="32.4" rx="5.4" ry="7" fill="#8a6858"/><path d="M0 40.5L3 38.5H12L17.6 41.5Q21 48 20 60L18.6 66H0Z" fill="#96440f"/><path d="M3 38.6L7.4 42.8L12 38.6L10 37.4H5Z" fill="#1a1a1a"/><path d="M0 65.6H18.4L17.4 73.4H0Z" fill="#141414"/><rect x="0" y="74.4" width="44" height="22" fill="#7b7b7b"/><path d="M0 75H16.5L16 79H0Z" fill="#555" fill-opacity="0.7"/><ellipse cx="8" cy="84" rx="10.5" ry="6.5" fill="#8a6a5c" fill-opacity="0.75"/><path d="M26 80L44 77.5V81L26 82Z" fill="#8c7240" fill-opacity="0.8"/><rect x="24" y="82" width="1" height="10" fill="#666"/><rect x="24" y="84" width="7" height="1" fill="#666"/><circle cx="41" cy="8.2" r="1.9" fill="#a8741a"/><path d="M41 7.2H44V9.2H41Z" fill="#a8741a"/><text x="12.2" y="8.6" font-family="Liberation Sans,sans-serif" font-size="6.8" font-weight="bold" fill="#111" textLength="19.2" lengthAdjust="spacingAndGlyphs">Leschs</text><text x="17.4" y="14.4" font-family="Liberation Sans,sans-serif" font-size="6.6" font-style="italic" fill="#151515" textLength="21" lengthAdjust="spacingAndGlyphs">Kosmos</text></g><g transform="translate(140,0)"><rect x="0" y="0" width="44" height="73.4" fill="#7d7d7d"/><rect x="0" y="14" width="15" height="59" fill="#747474"/><rect x="15" y="14" width="29" height="59" fill="#818181"/><rect x="23.6" y="34.6" width="3.2" height="23" fill="#1c1c1c"/><rect x="23.6" y="50" width="8" height="3" fill="#1a1a1a"/><rect x="30.4" y="52" width="1.2" height="7" fill="#1c1c1c"/><rect x="24" y="52" width="1.2" height="8" fill="#1c1c1c"/><path d="M26 59.5L44 57V67.5L26 60.5Z" fill="#9a6a1c"/><ellipse cx="7" cy="32.4" rx="5.4" ry="7" fill="#8a6858"/><path d="M0 40.5L3 38.5H12L17.6 41.5Q21 48 20 60L18.6 66H0Z" fill="#96440f"/><path d="M3 38.6L7.4 42.8L12 38.6L10 37.4H5Z" fill="#1a1a1a"/><path d="M0 65.6H18.4L17.4 73.4H0Z" fill="#141414"/><rect x="0" y="74.4" width="44" height="22" fill="#7b7b7b"/><path d="M0 75H16.5L16 79H0Z" fill="#555" fill-opacity="0.7"/><ellipse cx="8" cy="84" rx="10.5" ry="6.5" fill="#8a6a5c" fill-opacity="0.75"/><path d="M26 80L44 77.5V81L26 82Z" fill="#8c7240" fill-opacity="0.8"/><rect x="24" y="82" width="1" height="10" fill="#666"/><rect x="24" y="84" width="7" height="1" fill="#666"/><circle cx="41" cy="8.2" r="1.9" fill="#a8741a"/><path d="M41 7.2H44V9.2H41Z" fill="#a8741a"/><path d="M3.2 4.8H6.4M7.6 8H10M11.6 10.4H16" stroke="#222" stroke-width="1"/></g>
<rect x="0" y="74.4" width="186" height="24" fill="url(#lefade)"/>
</g>
</svg>
<!-- row 4 -->
<div class="abs card" style="left:182.0px;top:489.5px;width:186px;height:150px"></div>
<div class="abs ct" style="left:182.0px;top:600.5px">Youtube</div>
<div class="abs cs" style="left:182.0px;top:613px">TV shows</div>
<!-- Youtube thumbnail -->
<div class="abs" style="left:182px;top:489.5px;width:186px;height:104px;background:#808080;border-radius:4px 4px 0 0"></div>
<svg class="abs" style="left:182px;top:489.5px" width="186" height="104" viewBox="0 0 186 104">
<rect x="7.4" y="29.4" width="55.2" height="37.8" rx="8.5" ry="9" fill="#7f0000"/>
<path d="M29.2 39.8L43.8 48.3L29.2 56.8Z" fill="#808080"/>
<text transform="translate(68.8,63.6) scale(0.56,1)" font-family="Liberation Sans,sans-serif" font-weight="bold" font-size="43.5" fill="#141414" stroke="#141414" stroke-width="2.4" stroke-linejoin="round" letter-spacing="1">YouTube</text>
</svg>
</div>
<!-- SIDEBAR -->
<div class="abs" id="sidebar"></div>
<div class="abs" id="sideborder"></div>
<div class="abs" id="libsel"></div>
<svg class="abs" style="left:18.3px;top:99.0px" width="10.2" height="10.2" viewBox="0 0 11 11" fill="none" stroke="#9db59c" stroke-width="1.3" stroke-linejoin="round" stroke-linecap="round"><path d="M0.8 2.6A0.9 0.9 0 0 1 1.7 1.7H4L5 2.8H9.3A0.9 0.9 0 0 1 10.2 3.7V8.4A0.9 0.9 0 0 1 9.3 9.3H1.7A0.9 0.9 0 0 1 0.8 8.4Z"/></svg>
<div class="abs nav" style="top:97px;color:#9db59c">Library</div>
<svg class="abs" style="left:18.3px;top:121.0px" width="10.2" height="10.2" viewBox="0 0 11 11" fill="none" stroke="#1c1c1c" stroke-width="1.3" stroke-linejoin="round" stroke-linecap="round"><rect x="0.8" y="1.6" width="9.4" height="6.6" rx="1"/><path d="M3 3.8H8M3 5.8H8" stroke-width="0.9"/><path d="M3.6 9.6H7.4" stroke-width="1.3"/></svg>
<div class="abs nav" style="top:119px">Live TV</div>
<svg class="abs" style="left:18.3px;top:142.0px" width="10.2" height="10.2" viewBox="0 0 11 11" fill="none" stroke="#1c1c1c" stroke-width="1.3" stroke-linejoin="round" stroke-linecap="round"><path d="M0.7 4.2A7 7 0 0 1 10.3 4.2" stroke-width="1.3"/><path d="M2.6 6.2A4.2 4.2 0 0 1 8.4 6.2" stroke-width="1.3"/><circle cx="5.5" cy="8.6" r="0.9" fill="#1c1c1c" stroke="none"/></svg>
<div class="abs nav" style="top:140px">Network</div>
<svg class="abs" style="left:18.3px;top:163.5px" width="10.2" height="10.2" viewBox="0 0 11 11" fill="none" stroke="#1c1c1c" stroke-width="1.3" stroke-linejoin="round" stroke-linecap="round"><path d="M3.4 0.8V7.6H8M1.6 2.6L3.4 0.8L5.2 2.6"/><path d="M7.6 3.2V10M5.8 8.3L7.6 10.1L9.4 8.3"/></svg>
<div class="abs nav" style="top:161.5px">Transcoding</div>
<svg class="abs" style="left:18.3px;top:185.0px" width="10.2" height="10.2" viewBox="0 0 11 11" fill="none" stroke="#1c1c1c" stroke-width="1.3" stroke-linejoin="round" stroke-linecap="round"><path d="M1.4 2.2H9.6M1.4 4.4H9.6M1.4 6.6H9.6M1.4 8.8H9.6" stroke-width="1.5" stroke-linecap="butt"/></svg>
<div class="abs nav" style="top:183px">Database</div>
<svg class="abs" style="left:18.3px;top:206.5px" width="10.2" height="10.2" viewBox="0 0 11 11" fill="none" stroke="#1c1c1c" stroke-width="1.3" stroke-linejoin="round" stroke-linecap="round"><path d="M3.6 1.8A4 4 0 0 0 3 8.6M2.6 6.8L3 8.8L1 8.8" /><path d="M7.4 9.2A4 4 0 0 0 8 2.4M8.4 4.2L8 2.2L10 2.2"/></svg>
<div class="abs nav" style="top:204.5px">Conversions</div>
<svg class="abs" style="left:18.3px;top:228.0px" width="10.2" height="10.2" viewBox="0 0 11 11" fill="none" stroke="#1c1c1c" stroke-width="1.3" stroke-linejoin="round" stroke-linecap="round"><circle cx="5.5" cy="5.5" r="4.5"/><path d="M5.5 3V5.7L7.2 6.8"/></svg>
<div class="abs nav" style="top:226px">Scheduled Tasks</div>
<svg class="abs" style="left:18.3px;top:249.5px" width="10.2" height="10.2" viewBox="0 0 11 11" fill="none" stroke="#1c1c1c" stroke-width="1.3" stroke-linejoin="round" stroke-linecap="round"><path d="M0.9 8.6V2.6A0.8 0.8 0 0 1 1.7 1.8H4L5 2.9H8.6A0.8 0.8 0 0 1 9.4 3.7V4.6M0.9 8.8L2.3 5.2A0.8 0.8 0 0 1 3 4.7H10.2L8.8 8.6A0.8 0.8 0 0 1 8 9.2H1.5Z"/></svg>
<div class="abs nav" style="top:247.5px">Logs</div>
<svg class="abs" style="left:18.3px;top:271.0px" width="10.2" height="10.2" viewBox="0 0 11 11" fill="none" stroke="#1c1c1c" stroke-width="1.3" stroke-linejoin="round" stroke-linecap="round"><rect x="3.2" y="1.4" width="4.6" height="8.2"/><path d="M1.4 1.4V9.6M9.6 1.4V9.6" stroke-width="1.4" stroke-dasharray="1.4 1"/></svg>
<div class="abs nav" style="top:269px">Cinema Intros</div>
<svg class="abs" style="left:18.3px;top:292.0px" width="10.2" height="10.2" viewBox="0 0 11 11" fill="none" stroke="#1c1c1c" stroke-width="1.3" stroke-linejoin="round" stroke-linecap="round"><rect x="0.9" y="1.6" width="9.2" height="7.8" rx="1"/><path d="M2.8 5.4H4.6M6.2 5.4H8.2M2.8 7.3H5.4M7 7.3H8.2" stroke-width="1"/></svg>
<div class="abs nav" style="top:290px">Open Subtitles</div>
<svg class="abs" style="left:18.3px;top:339.0px" width="10.2" height="10.2" viewBox="0 0 11 11" fill="none" stroke="#1c1c1c" stroke-width="1.3" stroke-linejoin="round" stroke-linecap="round"><path d="M1.6 7.6V2.4H8.6M0.6 8.8H5.4"/><rect x="6.6" y="4.2" width="3.6" height="5" rx="0.6"/></svg>
<div class="abs nav" style="top:337px">Devices</div>
<svg class="abs" style="left:18.3px;top:360.5px" width="10.2" height="10.2" viewBox="0 0 11 11" fill="none" stroke="#1c1c1c" stroke-width="1.3" stroke-linejoin="round" stroke-linecap="round"><path d="M5.5 1.4V9M2.4 6L5.5 9.2L8.6 6"/></svg>
<div class="abs nav" style="top:358.5px">Downloads</div>
<svg class="abs" style="left:18.3px;top:382.0px" width="10.2" height="10.2" viewBox="0 0 11 11" fill="none" stroke="#1c1c1c" stroke-width="1.3" stroke-linejoin="round" stroke-linecap="round"><path d="M0.9 3.6A0.9 0.9 0 0 1 1.8 2.7H3.2L4 1.6H7L7.8 2.7H9.2A0.9 0.9 0 0 1 10.1 3.6V8.4A0.9 0.9 0 0 1 9.2 9.3H1.8A0.9 0.9 0 0 1 0.9 8.4Z"/><circle cx="5.5" cy="5.9" r="1.8"/></svg>
<div class="abs nav" style="top:380px">Camera Upload</div>
<svg class="abs" style="left:18.3px;top:428.5px" width="10.2" height="10.2" viewBox="0 0 11 11" fill="none" stroke="#1c1c1c" stroke-width="1.3" stroke-linejoin="round" stroke-linecap="round"><path d="M0.6 1.4H2L3.6 6.6H8.4L9.8 3.2"/><circle cx="4" cy="9" r="0.9" fill="#1c1c1c" stroke="none"/><circle cx="8" cy="9" r="0.9" fill="#1c1c1c" stroke="none"/><path d="M6 0.6V4.4M4.4 2.4H7.6" stroke-width="1"/></svg>
<div class="abs nav" style="top:426.5px">Plugins</div>
<svg class="abs" style="left:18.3px;top:450.0px" width="10.2" height="10.2" viewBox="0 0 11 11" fill="none" stroke="#1c1c1c" stroke-width="1.3" stroke-linejoin="round" stroke-linecap="round"><circle cx="3" cy="5.5" r="2.1"/><path d="M5.1 5.5H10.2V7.2M8 5.5V7"/></svg>
<div class="abs nav" style="top:448px">Api Keys</div>
<svg class="abs" style="left:18.3px;top:471.5px" width="10.2" height="10.2" viewBox="0 0 11 11" fill="none" stroke="#1c1c1c" stroke-width="1.3" stroke-linejoin="round" stroke-linecap="round"><path d="M1.2 9.8L1.8 7.2L7.6 1.4L9.6 3.4L3.8 9.2Z" fill="#1c1c1c"/></svg>
<div class="abs nav" style="top:469.5px">Metadata Manager</div>
<svg class="abs" style="left:18.3px;top:493.0px" width="10.2" height="10.2" viewBox="0 0 11 11" fill="none" stroke="#1c1c1c" stroke-width="1.3" stroke-linejoin="round" stroke-linecap="round"><path d="M1.6 5.5A4.1 4.1 0 1 0 2.9 2.5"/><path d="M1.2 1.4V3.4H3.2"/><path d="M5.6 3.4V5.7L7.2 6.6"/></svg>
<div class="abs nav" style="top:491px">Backup &amp; Restore</div>
<svg class="abs" style="left:18.3px;top:514.5px" width="10.2" height="10.2" viewBox="0 0 11 11" fill="none" stroke="#1c1c1c" stroke-width="1.3" stroke-linejoin="round" stroke-linecap="round"><path d="M0.8 2.6A0.9 0.9 0 0 1 1.7 1.7H4L5 2.8H9.3A0.9 0.9 0 0 1 10.2 3.7V8.4A0.9 0.9 0 0 1 9.3 9.3H1.7A0.9 0.9 0 0 1 0.8 8.4Z"/></svg>
<div class="abs nav" style="top:512.5px">Chapter API</div>
<svg class="abs" style="left:18.3px;top:536.0px" width="10.2" height="10.2" viewBox="0 0 11 11" fill="none" stroke="#1c1c1c" stroke-width="1.3" stroke-linejoin="round" stroke-linecap="round"><rect x="2.6" y="1" width="7.6" height="6.8" rx="0.8"/><path d="M0.9 3V9A0.8 0.8 0 0 0 1.7 9.8H8"/><path d="M4.4 3.2H8.4M4.4 5.2H7" stroke-width="0.9"/></svg>
<div class="abs nav" style="top:534px">Scripter-X → Actions</div>
<div class="abs navh" style="top:317px">Devices</div>
<svg class="abs" style="left:127.5px;top:321.5px" width="8" height="5" viewBox="0 0 8 5"><path d="M0.7 0.7L4 4L7.3 0.7" stroke="#1f651d" stroke-width="1.3" fill="none"/></svg>
<div class="abs navh" style="top:406.5px">Advanced</div>
<svg class="abs" style="left:127.5px;top:411.0px" width="8" height="5" viewBox="0 0 8 5"><path d="M0.7 0.7L4 4L7.3 0.7" stroke="#1f651d" stroke-width="1.3" fill="none"/></svg>
<!-- MODAL -->
<div class="abs" style="left:319px;top:133px;width:1px;height:450px;background:rgba(255,255,255,.6);z-index:1"></div>
<div class="abs" style="left:324px;top:128px;width:552px;height:1px;background:rgba(255,255,255,.3);z-index:1"></div>
<div class="abs" id="modal">
<svg class="abs" style="left:19.6px;top:18px" width="8.4" height="8.4" viewBox="0 0 8.4 8.4"><path d="M0.3 0.3L8.1 8.1M8.1 0.3L0.3 8.1" stroke="#1a1a1a" stroke-width="1.25" fill="none"/></svg>
<div class="abs" style="left:43.6px;top:15.3px;font-size:10.75px;font-weight:bold;line-height:14px;color:#1c1c1c;white-space:nowrap">Podcasts</div>
<div class="abs" style="left:24.4px;top:43.2px;width:16.2px;height:16px;border-radius:2.5px;background:#52b54b"></div><svg class="abs" style="left:27.4px;top:46.800000000000004px" width="10" height="9" viewBox="0 0 10 9"><path d="M0.8 4.8L3.6 7.6L9.2 1.2" stroke="#fff" stroke-width="1.5" fill="none"/></svg>
<div class="abs lbl" style="left:46px;top:44.5px">Nfo</div>
<div class="abs desc" style="top:66px">Choose the file formats to save your metadata to.</div>
<div class="abs h2" style="top:105px">Album Image Fetchers</div>
<div class="abs pill" style="left:177.5px;top:103px">Fetcher Settings</div>
<div class="abs desc" style="top:132.5px">Enable and rank your preferred image fetchers in order of priority.</div>
<div class="abs cb" style="top:156.7px"></div>
<div class="abs lbl" style="top:159.2px">MusicBrainz</div>
<svg class="abs" style="left:518.3px;top:162.60px" width="10" height="4.4" viewBox="0 0 10 4.4"><rect x="0" y="0" width="10" height="1.6" fill="#1e1e1e"/><rect x="0" y="2.6" width="10" height="1.6" fill="#2e2e2e"/></svg>
<div class="abs sep" style="top:180.0px"></div>
<div class="abs cb" style="top:188.05px"></div>
<div class="abs lbl" style="top:190.55px">FanArt</div>
<svg class="abs" style="left:518.3px;top:193.95px" width="10" height="4.4" viewBox="0 0 10 4.4"><rect x="0" y="0" width="10" height="1.6" fill="#1e1e1e"/><rect x="0" y="2.6" width="10" height="1.6" fill="#2e2e2e"/></svg>
<div class="abs sep" style="top:211.35px"></div>
<div class="abs cb" style="top:219.4px"></div>
<div class="abs lbl" style="top:221.9px">TheAudioDB</div>
<svg class="abs" style="left:518.3px;top:225.30px" width="10" height="4.4" viewBox="0 0 10 4.4"><rect x="0" y="0" width="10" height="1.6" fill="#1e1e1e"/><rect x="0" y="2.6" width="10" height="1.6" fill="#2e2e2e"/></svg>
<div class="abs sep" style="top:242.7px"></div>
<div class="abs h2" style="top:269px">Artist Image Fetchers</div>
<div class="abs pill" style="left:171px;top:266.8px">Fetcher Settings</div>
<div class="abs desc" style="top:296.5px">Enable and rank your preferred image fetchers in order of priority.</div>
<div class="abs cb" style="top:321px"></div>
<div class="abs lbl" style="top:323.5px">FanArt</div>
<svg class="abs" style="left:518.3px;top:326.90px" width="10" height="4.4" viewBox="0 0 10 4.4"><rect x="0" y="0" width="10" height="1.6" fill="#1e1e1e"/><rect x="0" y="2.6" width="10" height="1.6" fill="#2e2e2e"/></svg>
<div class="abs sep" style="top:344.3px"></div>
<div class="abs cb" style="top:352.35px"></div>
<div class="abs lbl" style="top:354.85px">TheAudioDB</div>
<svg class="abs" style="left:518.3px;top:358.25px" width="10" height="4.4" viewBox="0 0 10 4.4"><rect x="0" y="0" width="10" height="1.6" fill="#1e1e1e"/><rect x="0" y="2.6" width="10" height="1.6" fill="#2e2e2e"/></svg>
<div class="abs sep" style="top:375.65px"></div>
<div class="abs h2" style="top:399.3px">Song Image Fetchers</div>
<div class="abs desc" style="top:424.5px">Enable and rank your preferred image fetchers in order of priority.</div>
<div class="abs" style="left:26.9px;top:448.5px;width:16.2px;height:16px;border-radius:2.5px;background:#52b54b"></div><svg class="abs" style="left:29.9px;top:452.6px" width="10" height="9" viewBox="0 0 10 9"><path d="M0.8 4.8L3.6 7.6L9.2 1.2" stroke="#fff" stroke-width="1.5" fill="none"/></svg>
<div class="abs lbl" style="top:451.5px">Embedded Images</div>
<svg class="abs" style="left:518.3px;top:454.90px" width="10" height="4.4" viewBox="0 0 10 4.4"><rect x="0" y="0" width="10" height="1.6" fill="#1e1e1e"/><rect x="0" y="2.6" width="10" height="1.6" fill="#2e2e2e"/></svg>
<div class="abs sep" style="top:472.3px"></div>
<div class="abs" style="left:557px;top:251.7px;width:2px;height:78px;border-radius:1px;background:#8a8a8a"></div>
</div>
<!-- BROWSER CHROME -->
<div class="abs" id="titlebar"></div>
<div class="abs" id="title">multimedia — Mozilla Firefox</div>
<div class="abs" style="left:1149.6px;top:8.4px;width:4.4px;height:1.2px;background:#b4b4b4"></div>
<svg class="abs" style="left:1167px;top:6px" width="6" height="6" viewBox="0 0 6 6"><path d="M3.6 1H5V2.4M2.4 5H1V3.6" stroke="#a8a8a8" stroke-width="1" fill="none"/></svg>
<div class="abs" style="left:1184.5px;top:4.5px;width:9px;height:9px;border-radius:50%;background:#6aa7d2"></div>
<svg class="abs" style="left:1187.1px;top:7.1px" width="3.8" height="3.8" viewBox="0 0 3.8 3.8"><path d="M0 0L3.8 3.8M3.8 0L0 3.8" stroke="#23313f" stroke-width="1.2" fill="none"/></svg>
<svg class="abs" style="left:6.5px;top:25.5px" width="11.0" height="11.0" viewBox="0 0 12 12"><defs><radialGradient id="fx1231" cx="0.7" cy="0.15" r="0.95"><stop offset="0" stop-color="#ffe14a"/><stop offset="0.35" stop-color="#ff9a2a"/><stop offset="0.7" stop-color="#ff3b57"/><stop offset="1" stop-color="#c0288a"/></radialGradient></defs><circle cx="6" cy="6.3" r="5.4" fill="url(#fx1231)"/><path d="M7.2 0.2 C8.6 1.4 9.3 2.6 9.2 4 L7.4 3.2Z" fill="#ffd23a"/><circle cx="5.6" cy="6.2" r="2.5" fill="#7a3fd6"/><path d="M2.6 5.2 C4 4.2 6 4.3 7.2 5.6 C6 5.2 4.6 5.6 4 6.8 C3.2 6.6 2.7 6 2.6 5.2Z" fill="#ff8a2a"/></svg>
<div class="abs" style="left:26px;top:18px;width:1px;height:26px;background:#444"></div>
<div class="abs tab" id="tab1"></div>
<svg class="abs" style="left:33.5px;top:25.5px" width="11" height="11" viewBox="0 0 11 11"><path d="M5.5 0.2 L10.8 5.5 L5.5 10.8 L0.2 5.5Z" fill="#4caf50"/><path d="M4.2 3.3 L7.6 5.5 L4.2 7.7Z" fill="#fff"/></svg>
<div class="abs" style="left:48px;top:25.7px;font-size:8.6px;letter-spacing:-0.17px;line-height:12px;color:#e6e6e6;white-space:nowrap">multimedia</div>
<svg class="abs" style="left:154.8px;top:28.9px" width="5.2" height="5.2" viewBox="0 0 5.2 5.2"><path d="M0 0L5.2 5.2M5.2 0L0 5.2" stroke="#d0d0d0" stroke-width="1.0" fill="none"/></svg>
<svg class="abs" style="left:174.5px;top:25.5px" width="11" height="11" viewBox="0 0 11 11"><path d="M5.5 0.2 L10.8 5.5 L5.5 10.8 L0.2 5.5Z" fill="#4caf50"/><path d="M4.2 3.3 L7.6 5.5 L4.2 7.7Z" fill="#fff"/></svg>
<div class="abs" style="left:188px;top:25.7px;font-size:8.6px;letter-spacing:-0.17px;line-height:12px;color:#e6e6e6;white-space:nowrap">multimedia</div>
<svg class="abs" style="left:295.8px;top:28.9px" width="5.2" height="5.2" viewBox="0 0 5.2 5.2"><path d="M0 0L5.2 5.2M5.2 0L0 5.2" stroke="#d0d0d0" stroke-width="1.0" fill="none"/></svg>
<svg class="abs" style="left:314.5px;top:25.5px" width="11" height="11" viewBox="0 0 11 11"><path d="M5.5 0.2 L10.8 5.5 L5.5 10.8 L0.2 5.5Z" fill="#4caf50"/><path d="M4.2 3.3 L7.6 5.5 L4.2 7.7Z" fill="#fff"/></svg>
<div class="abs" style="left:329px;top:25.7px;font-size:8.6px;letter-spacing:-0.42px;line-height:12px;color:#e6e6e6;white-space:nowrap">Scripter-X → Actions</div>
<svg class="abs" style="left:435.8px;top:28.9px" width="5.2" height="5.2" viewBox="0 0 5.2 5.2"><path d="M0 0L5.2 5.2M5.2 0L0 5.2" stroke="#d0d0d0" stroke-width="1.0" fill="none"/></svg>
<svg class="abs" style="left:455.5px;top:25.5px" width="11" height="11" viewBox="0 0 11 11"><path d="M5.5 0.2 L10.8 5.5 L5.5 10.8 L0.2 5.5Z" fill="#4caf50"/><path d="M4.2 3.3 L7.6 5.5 L4.2 7.7Z" fill="#fff"/></svg>
<div class="abs" style="left:470px;top:25.7px;font-size:8.6px;letter-spacing:-0.42px;line-height:12px;color:#e6e6e6;white-space:nowrap">Scheduled Tasks</div>
<svg class="abs" style="left:576.8px;top:28.9px" width="5.2" height="5.2" viewBox="0 0 5.2 5.2"><path d="M0 0L5.2 5.2M5.2 0L0 5.2" stroke="#d0d0d0" stroke-width="1.0" fill="none"/></svg>
<svg class="abs" style="left:599.2px;top:27.5px" width="8" height="8" viewBox="0 0 8 8"><path d="M4 0V8M0 4H8" stroke="#d8d8d8" stroke-width="1.1"/></svg>
<svg class="abs" style="left:1183px;top:29px" width="8" height="5" viewBox="0 0 8 5"><path d="M0.5 0.5L4 4L7.5 0.5" stroke="#d8d8d8" stroke-width="1.1" fill="none"/></svg>
<div class="abs" id="navbar"></div>
<svg class="abs" style="left:10px;top:53px" width="10" height="9" viewBox="0 0 10 9"><path d="M9.5 4.5H1M4.5 0.8L0.8 4.5L4.5 8.2" stroke="#e0e0e0" stroke-width="1.1" fill="none"/></svg>
<svg class="abs" style="left:32px;top:53px" width="10" height="9" viewBox="0 0 10 9"><path d="M0.5 4.5H9M5.5 0.8L9.2 4.5L5.5 8.2" stroke="#7c7c7c" stroke-width="1.1" fill="none"/></svg>
<svg class="abs" style="left:55px;top:52px" width="11" height="11" viewBox="0 0 11 11"><path d="M9.3 5.6A4 4 0 1 1 7.6 2.3" stroke="#e0e0e0" stroke-width="1.1" fill="none"/><path d="M6.6 0.6H9.8V3.8Z" fill="#e0e0e0"/></svg>
<svg class="abs" style="left:77px;top:52px" width="11" height="11" viewBox="0 0 11 11"><path d="M0.8 5.6L5.5 1L10.2 5.6M2.2 4.6V10H8.8V4.6M4.6 10V7.2H6.4V10" stroke="#e0e0e0" stroke-width="1.1" fill="none" stroke-linejoin="round"/></svg>
<div class="abs" id="urlbar"></div>
<svg class="abs" style="left:173px;top:52px" width="9" height="10" viewBox="0 0 9 10"><path d="M4.5 0.6L8.3 2V5C8.3 7.2 6.6 8.8 4.5 9.5C2.4 8.8 0.7 7.2 0.7 5V2Z" stroke="#d6d6d6" stroke-width="1" fill="none"/></svg>
<svg class="abs" style="left:189px;top:52px" width="10" height="11" viewBox="0 0 10 11"><rect x="1.6" y="5" width="6.8" height="5" rx="1" stroke="#d6d6d6" stroke-width="1" fill="none"/><path d="M3.2 5V3.2A1.8 1.8 0 0 1 6.8 3.2V5" stroke="#d6d6d6" stroke-width="1" fill="none"/><path d="M0.8 1L9 9.6" stroke="#e2344c" stroke-width="1.2"/></svg>
<div class="abs" id="url"><b>192.168.0.207</b>/web/index.html#!/librarysetup</div>
<svg class="abs" style="left:950px;top:52px" width="11" height="11" viewBox="0 0 11 11"><path d="M5.5 0.9L6.9 4L10.2 4.3L7.7 6.5L8.5 9.8L5.5 8L2.5 9.8L3.3 6.5L0.8 4.3L4.1 4Z" stroke="#d6d6d6" stroke-width="0.9" fill="none" stroke-linejoin="round"/></svg>
<svg class="abs" style="left:1045px;top:53px" width="10" height="9" viewBox="0 0 10 9"><path d="M0.7 0.8H9.3V4A4.3 4.3 0 0 1 0.7 4Z" stroke="#dcdcdc" stroke-width="1" fill="none" stroke-linejoin="round"/><path d="M3 3.4L5 5.3L7 3.4" stroke="#dcdcdc" stroke-width="1" fill="none"/></svg>
<svg class="abs" style="left:1067px;top:52px" width="10" height="10" viewBox="0 0 10 10"><path d="M5 0.5V6.5M2.3 4L5 6.7L7.7 4M0.8 7.5V9.3H9.2V7.5" stroke="#dcdcdc" stroke-width="1.1" fill="none"/></svg>
<svg class="abs" style="left:1090px;top:52px" width="10" height="11" viewBox="0 0 10 11"><path d="M5 0.4L9.4 1.8V5.2C9.4 7.8 7.4 9.6 5 10.6C2.6 9.6 0.6 7.8 0.6 5.2V1.8Z" fill="#8a8a8a"/><text x="5" y="6.6" font-size="3.6" font-family="Liberation Sans,sans-serif" font-weight="bold" text-anchor="middle" fill="#dedede">uD</text></svg>
<svg class="abs" style="left:1112px;top:52px" width="11" height="11" viewBox="0 0 11 11"><path d="M5.5 2V9M3.5 3H7.5" stroke="#333" stroke-width="1.2" fill="none"/><path d="M0.8 0.8L10.2 10.2" stroke="#c0283c" stroke-width="1.2"/></svg>
<svg class="abs" style="left:1135px;top:52px" width="10" height="11" viewBox="0 0 10 11"><circle cx="3.8" cy="5.5" r="3.5" fill="#f1f1f1"/><circle cx="7.4" cy="3.8" r="1.9" fill="#f1f1f1"/><circle cx="7.4" cy="7.6" r="1.7" fill="#f1f1f1"/></svg>
<svg class="abs" style="left:1157px;top:52px" width="10" height="11" viewBox="0 0 10 11"><path d="M1 4H2.2V2.5A1.3 1.3 0 0 1 4.8 2.5V4H8.6V10H1Z" transform="translate(0.3,0.2)" stroke="#e0e0e0" stroke-width="1.1" fill="none" stroke-linejoin="round"/></svg>
<div class="abs" style="left:1181px;top:53.5px;width:8px;height:7px;border-top:1.1px solid #dcdcdc;border-bottom:1.1px solid #dcdcdc"></div><div class="abs" style="left:1181px;top:56.5px;width:8px;height:1.1px;background:#dcdcdc"></div>
<svg class="abs" style="left:7.4px;top:73.9px" width="10.4" height="10.4" viewBox="0 0 12 12"><defs><radialGradient id="fx1278" cx="0.7" cy="0.15" r="0.95"><stop offset="0" stop-color="#ffe14a"/><stop offset="0.35" stop-color="#ff9a2a"/><stop offset="0.7" stop-color="#ff3b57"/><stop offset="1" stop-color="#c0288a"/></radialGradient></defs><circle cx="6" cy="6.3" r="5.4" fill="url(#fx1278)"/><path d="M7.2 0.2 C8.6 1.4 9.3 2.6 9.2 4 L7.4 3.2Z" fill="#ffd23a"/><circle cx="5.6" cy="6.2" r="2.5" fill="#7a3fd6"/><path d="M2.6 5.2 C4 4.2 6 4.3 7.2 5.6 C6 5.2 4.6 5.6 4 6.8 C3.2 6.6 2.7 6 2.6 5.2Z" fill="#ff8a2a"/></svg>
<div class="abs bm" style="left:20px">New Tab</div>
<svg class="abs" style="left:1118px;top:74.9px" width="10" height="8" viewBox="0 0 10 8"><path d="M0.6 1.6A1 1 0 0 1 1.6 0.6H3.8L4.8 1.6H8.4A1 1 0 0 1 9.4 2.6V6.4A1 1 0 0 1 8.4 7.4H1.6A1 1 0 0 1 0.6 6.4Z" stroke="#e0e0e0" stroke-width="0.9" fill="none"/></svg>
<div class="abs bm" style="left:1130px">Other Bookmarks</div>
<div class="abs" id="chromeline"></div>
<!-- FIND BAR -->
<div class="abs" id="findbar"></div>
<div class="abs" id="findinput"></div>
<div class="abs ft" style="left:11px;color:#e6e6e6">podca</div>
<svg class="abs" style="left:150px;top:637px" width="8" height="5" viewBox="0 0 8 5"><path d="M0.5 4.5L4 1L7.5 4.5" stroke="#d8d8d8" stroke-width="1.1" fill="none"/></svg>
<svg class="abs" style="left:169px;top:637.5px" width="8" height="5" viewBox="0 0 8 5"><path d="M0.5 0.5L4 4L7.5 0.5" stroke="#d8d8d8" stroke-width="1.1" fill="none"/></svg>
<div class="abs fcb" style="left:193px"></div>
<div class="abs ft" style="left:207px">Highlight <u>A</u>ll</div>
<div class="abs fcb" style="left:260px"></div>
<div class="abs ft" style="left:273px">Match <u>C</u>ase</div>
<div class="abs fcb" style="left:324px"></div>
<div class="abs ft" style="left:338px">Match D<u>i</u>acritics</div>
<div class="abs fcb" style="left:404px"></div>
<div class="abs ft" style="left:417px"><u>W</u>hole Words</div>
<div class="abs ft" style="left:477px">2 of 3 matches</div>
<svg class="abs" style="left:1183.5px;top:636.5px" width="7" height="7" viewBox="0 0 7 7"><path d="M0.4 0.4L6.6 6.6M6.6 0.4L0.4 6.6" stroke="#dcdcdc" stroke-width="1.1"/></svg>
<!-- PANEL -->
<div class="abs" id="panel">
<svg class="abs" style="left:3px;top:1.6px" width="20" height="20" viewBox="0 0 20 20"><circle cx="10" cy="10" r="9" fill="none" stroke="#f0f0f0" stroke-width="1.6"/><path d="M2.2 14.2L7.6 7.4L10 10.4L12.6 6.6L17.8 14.2A9 9 0 0 1 2.2 14.2Z" fill="#f0f0f0"/></svg>
<div class="abs" style="left:27px;top:5.6px;font-size:8.3px;font-weight:bold;line-height:12px;color:#f4f4f4;letter-spacing:-0.3px">Menu</div>
<div class="abs tk" style="left:55px;width:52.5px"><i style="width:52.5px"></i><span>hel...</span></div>
<svg class="abs" style="left:59.4px;top:3px" width="19" height="16.4" viewBox="0 0 19 16.4"><path d="M1.4 1.6A1.2 1.2 0 0 1 2.6 0.4H6.6L8 1.8H16.4A1.2 1.2 0 0 1 17.6 3V5H1.4Z" fill="#f2f2f2"/><path d="M0 4A1.2 1.2 0 0 1 1.2 2.8H17.8A1.2 1.2 0 0 1 19 4V15A1.2 1.2 0 0 1 17.8 16.2H1.2A1.2 1.2 0 0 1 0 15Z" fill="#64a6ce"/></svg>
<div class="abs tk" style="left:111.25px;width:52.5px"><i style="width:52.5px"></i><span>pod...</span></div>
<svg class="abs" style="left:115.65px;top:3px" width="19" height="16.4" viewBox="0 0 19 16.4"><path d="M1.4 1.6A1.2 1.2 0 0 1 2.6 0.4H6.6L8 1.8H16.4A1.2 1.2 0 0 1 17.6 3V5H1.4Z" fill="#f2f2f2"/><path d="M0 4A1.2 1.2 0 0 1 1.2 2.8H17.8A1.2 1.2 0 0 1 19 4V15A1.2 1.2 0 0 1 17.8 16.2H1.2A1.2 1.2 0 0 1 0 15Z" fill="#64a6ce"/></svg>
<div class="abs tk" style="left:167.5px;width:52.5px"><i style="width:52.5px"></i><span>exp...</span></div>
<svg class="abs" style="left:171.9px;top:3px" width="19" height="16.4" viewBox="0 0 19 16.4"><path d="M1.4 1.6A1.2 1.2 0 0 1 2.6 0.4H6.6L8 1.8H16.4A1.2 1.2 0 0 1 17.6 3V5H1.4Z" fill="#f2f2f2"/><path d="M0 4A1.2 1.2 0 0 1 1.2 2.8H17.8A1.2 1.2 0 0 1 19 4V15A1.2 1.2 0 0 1 17.8 16.2H1.2A1.2 1.2 0 0 1 0 15Z" fill="#64a6ce"/></svg>
<div class="abs tk" style="left:223.75px;width:52.5px"><i style="width:52.5px"></i><span>qui...</span></div>
<svg class="abs" style="left:228.15px;top:1.2px" width="18.4" height="19" viewBox="0 0 18.4 19"><rect x="0.4" y="0.4" width="17.6" height="18.2" rx="4" fill="#282828" stroke="#171717" stroke-width="0.9"/><text x="2.6" y="7.2" font-size="5.6" font-weight="bold" font-family="Liberation Sans,sans-serif" fill="#ececec">$</text><rect x="6" y="6.4" width="3.4" height="1" fill="#d8d8d8"/></svg>
<div class="abs tk" style="left:280px;width:52.5px"><i style="width:52.5px"></i><span>qui...</span></div>
<svg class="abs" style="left:284.4px;top:1.2px" width="18.4" height="19" viewBox="0 0 18.4 19"><rect x="0.4" y="0.4" width="17.6" height="18.2" rx="4" fill="#282828" stroke="#171717" stroke-width="0.9"/><text x="2.6" y="7.2" font-size="5.6" font-weight="bold" font-family="Liberation Sans,sans-serif" fill="#ececec">$</text><rect x="6" y="6.4" width="3.4" height="1" fill="#d8d8d8"/></svg>
<div class="abs tk" style="left:336.25px;width:52.5px"><i style="width:52.5px"></i><span>qui...</span></div>
<svg class="abs" style="left:340.65px;top:1.2px" width="18.4" height="19" viewBox="0 0 18.4 19"><rect x="0.4" y="0.4" width="17.6" height="18.2" rx="4" fill="#282828" stroke="#171717" stroke-width="0.9"/><text x="2.6" y="7.2" font-size="5.6" font-weight="bold" font-family="Liberation Sans,sans-serif" fill="#ececec">$</text><rect x="6" y="6.4" width="3.4" height="1" fill="#d8d8d8"/></svg>
<div class="abs tk" style="left:392.5px;width:52.5px"><i style="width:52.5px"></i><span>qui...</span></div>
<svg class="abs" style="left:396.9px;top:1.2px" width="18.4" height="19" viewBox="0 0 18.4 19"><rect x="0.4" y="0.4" width="17.6" height="18.2" rx="4" fill="#282828" stroke="#171717" stroke-width="0.9"/><text x="2.6" y="7.2" font-size="5.6" font-weight="bold" font-family="Liberation Sans,sans-serif" fill="#ececec">$</text><rect x="6" y="6.4" width="3.4" height="1" fill="#d8d8d8"/></svg>
<div class="abs tk" style="left:448.3px;width:51.8px"><i style="width:51.8px"></i><span>qui...</span></div>
<svg class="abs" style="left:452.7px;top:1.2px" width="18.4" height="19" viewBox="0 0 18.4 19"><rect x="0.4" y="0.4" width="17.6" height="18.2" rx="4" fill="#282828" stroke="#171717" stroke-width="0.9"/><text x="2.6" y="7.2" font-size="5.6" font-weight="bold" font-family="Liberation Sans,sans-serif" fill="#ececec">$</text><rect x="6" y="6.4" width="3.4" height="1" fill="#d8d8d8"/></svg>
<div class="abs tk" style="left:504.3px;width:51.8px"><i style="width:51.8px"></i><span>pod...</span></div>
<svg class="abs" style="left:508.90000000000003px;top:1.6px" width="18" height="18.4" viewBox="0 0 18 18.4"><rect x="0" y="0" width="18" height="18.4" rx="4" fill="#f0893a"/><rect x="0.6" y="0.6" width="16.8" height="17.2" rx="3.6" fill="none" stroke="#f8aa66" stroke-width="0.8"/><path d="M9 4.2A5.4 5.4 0 1 0 14.4 9.6C14.4 7.6 13.6 6 12.6 5.2C13.2 6.6 13 7.6 12.6 8.2C12.2 6.4 10.6 5 9 4.2Z" fill="#fdf0e4"/><circle cx="10" cy="9" r="2.6" fill="#f0893a"/><path d="M4.4 8.4C5.6 7.4 7.6 7.6 8.4 8.8C7.6 8.6 6.8 9.2 7 10C6 10.2 4.8 9.6 4.4 8.4Z" fill="#fdf0e4"/></svg>
<div class="abs tk" style="left:559.5px;width:51.8px;background:#6c6c6c"><i style="width:51.8px"></i><span>mu...</span></div>
<svg class="abs" style="left:564.1px;top:1.6px" width="18" height="18.4" viewBox="0 0 18 18.4"><rect x="0" y="0" width="18" height="18.4" rx="4" fill="#f0893a"/><rect x="0.6" y="0.6" width="16.8" height="17.2" rx="3.6" fill="none" stroke="#f8aa66" stroke-width="0.8"/><path d="M9 4.2A5.4 5.4 0 1 0 14.4 9.6C14.4 7.6 13.6 6 12.6 5.2C13.2 6.6 13 7.6 12.6 8.2C12.2 6.4 10.6 5 9 4.2Z" fill="#fdf0e4"/><circle cx="10" cy="9" r="2.6" fill="#f0893a"/><path d="M4.4 8.4C5.6 7.4 7.6 7.6 8.4 8.8C7.6 8.6 6.8 9.2 7 10C6 10.2 4.8 9.6 4.4 8.4Z" fill="#fdf0e4"/></svg>
<div class="abs tk" style="left:615px;width:51.8px"><i style="width:51.8px"></i><span>Do...</span></div>
<svg class="abs" style="left:619.4px;top:3px" width="19" height="16.4" viewBox="0 0 19 16.4"><path d="M1.4 1.6A1.2 1.2 0 0 1 2.6 0.4H6.6L8 1.8H16.4A1.2 1.2 0 0 1 17.6 3V5H1.4Z" fill="#f2f2f2"/><path d="M0 4A1.2 1.2 0 0 1 1.2 2.8H17.8A1.2 1.2 0 0 1 19 4V15A1.2 1.2 0 0 1 17.8 16.2H1.2A1.2 1.2 0 0 1 0 15Z" fill="#64a6ce"/></svg>
<div class="abs tk" style="left:670.75px;width:51.8px"><i style="width:51.8px"></i><span>em...</span></div>
<svg class="abs" style="left:675.15px;top:3px" width="19" height="16.4" viewBox="0 0 19 16.4"><path d="M1.4 1.6A1.2 1.2 0 0 1 2.6 0.4H6.6L8 1.8H16.4A1.2 1.2 0 0 1 17.6 3V5H1.4Z" fill="#f2f2f2"/><path d="M0 4A1.2 1.2 0 0 1 1.2 2.8H17.8A1.2 1.2 0 0 1 19 4V15A1.2 1.2 0 0 1 17.8 16.2H1.2A1.2 1.2 0 0 1 0 15Z" fill="#64a6ce"/></svg>
<div class="abs tk" style="left:726.25px;width:51.8px"><i style="width:51.8px"></i><span>qui...</span></div>
<svg class="abs" style="left:730.65px;top:1.2px" width="18.4" height="19" viewBox="0 0 18.4 19"><rect x="0.4" y="0.4" width="17.6" height="18.2" rx="4" fill="#282828" stroke="#171717" stroke-width="0.9"/><text x="2.6" y="7.2" font-size="5.6" font-weight="bold" font-family="Liberation Sans,sans-serif" fill="#ececec">$</text><rect x="6" y="6.4" width="3.4" height="1" fill="#d8d8d8"/></svg>
<div class="abs tk" style="left:782px;width:51.8px"><i style="width:51.8px"></i><span>Do...</span></div>
<svg class="abs" style="left:786.4px;top:3px" width="19" height="16.4" viewBox="0 0 19 16.4"><path d="M1.4 1.6A1.2 1.2 0 0 1 2.6 0.4H6.6L8 1.8H16.4A1.2 1.2 0 0 1 17.6 3V5H1.4Z" fill="#f2f2f2"/><path d="M0 4A1.2 1.2 0 0 1 1.2 2.8H17.8A1.2 1.2 0 0 1 19 4V15A1.2 1.2 0 0 1 17.8 16.2H1.2A1.2 1.2 0 0 1 0 15Z" fill="#64a6ce"/></svg>
<div class="abs tk" style="left:837.5px;width:51.8px"><i style="width:51.8px"></i><span>Kodi</span></div>
<svg class="abs" style="left:841.9px;top:1.4px" width="19" height="19.4" viewBox="0 0 20 20"><rect width="20" height="20" fill="#e4e4e4"/><g fill="#2ea3dc"><path d="M10 2.4L12.6 5L10 7.6L7.4 5Z"/><path d="M6.2 6.2L8.8 8.8L6.2 11.4L3.6 8.8Z"/><path d="M13.8 6.2L16.4 8.8L13.8 11.4L11.2 8.8Z" opacity=".8"/><path d="M10 10L12.6 12.6L10 15.2L7.4 12.6Z" opacity=".9"/></g><text x="10" y="18.8" font-size="3.8" font-weight="bold" text-anchor="middle" font-family="Liberation Sans,sans-serif" fill="#222">KODI</text></svg>
<div class="abs tk" style="left:893px;width:51.8px"><i style="width:51.8px"></i><span>rss-...</span></div>
<svg class="abs" style="left:897.4px;top:3px" width="19" height="16.4" viewBox="0 0 19 16.4"><path d="M1.4 1.6A1.2 1.2 0 0 1 2.6 0.4H6.6L8 1.8H16.4A1.2 1.2 0 0 1 17.6 3V5H1.4Z" fill="#f2f2f2"/><path d="M0 4A1.2 1.2 0 0 1 1.2 2.8H17.8A1.2 1.2 0 0 1 19 4V15A1.2 1.2 0 0 1 17.8 16.2H1.2A1.2 1.2 0 0 1 0 15Z" fill="#64a6ce"/></svg>
<div class="abs tk" style="left:949px;width:51.8px"><i style="width:51.8px"></i><span>000...</span></div>
<svg class="abs" style="left:953.4px;top:3px" width="19" height="16.4" viewBox="0 0 19 16.4"><path d="M1.4 1.6A1.2 1.2 0 0 1 2.6 0.4H6.6L8 1.8H16.4A1.2 1.2 0 0 1 17.6 3V5H1.4Z" fill="#f2f2f2"/><path d="M0 4A1.2 1.2 0 0 1 1.2 2.8H17.8A1.2 1.2 0 0 1 19 4V15A1.2 1.2 0 0 1 17.8 16.2H1.2A1.2 1.2 0 0 1 0 15Z" fill="#64a6ce"/></svg>
<svg class="abs" style="left:1013px;top:7.0px" width="12.4" height="9" viewBox="0 0 12.4 9"><circle cx="8.8" cy="4.5" r="3.3" fill="#e4e4e4"/><circle cx="9.8" cy="4.5" r="1" fill="#2d2d2d"/><path d="M0.2 3.6H6V5.4H3.6V6.8H2.2V5.4H0.2Z" fill="#e4e4e4"/></svg>
<svg class="abs" style="left:1029.5px;top:3.7px" width="15" height="15.6" viewBox="0 0 15 15.6"><path d="M3.4 0.6Q7.5 -0.4 11.6 0.6Q14.4 1.2 14.6 4.2Q15 8 14.4 11.4Q13.8 14.6 10.6 15Q7.5 15.6 4.4 15Q1.2 14.4 0.6 11.4Q0 8 0.4 4.2Q0.6 1.2 3.4 0.6Z" fill="#6aaa1e"/><path d="M4.6 8L6.8 10.2L10.8 5.8" stroke="#fff" stroke-width="1.6" fill="none"/></svg>
<svg class="abs" style="left:1049.5px;top:6.1px" width="10" height="11" viewBox="0 0 10 11"><path d="M1 8.2Q2.4 7 2.4 4.6Q2.4 2.2 4.6 1.8Q6.8 2.2 6.8 4.6Q6.8 7 8.2 8.2Z" fill="#e4e4e4" transform="rotate(18 5 5)"/><circle cx="7.8" cy="2.2" r="1.7" fill="#e4e4e4"/><circle cx="3.4" cy="9.6" r="1" fill="#e4e4e4"/></svg>
<div class="abs" style="left:1063.3px;top:5.9px;font-size:8.8px;font-weight:bold;line-height:12px;color:#f0f0f0;letter-spacing:-0.3px">10</div>
<svg class="abs" style="left:1078px;top:6.5px" width="9.4" height="10" viewBox="0 0 9.4 10"><rect x="2.2" y="0.2" width="5" height="2.6" fill="#e4e4e4"/><rect x="0.2" y="3" width="9" height="4.2" rx="0.8" fill="#e4e4e4"/><rect x="2.2" y="6" width="5" height="3.6" fill="#e4e4e4" stroke="#2d2d2d" stroke-width="0.7"/></svg>
<svg class="abs" style="left:1094px;top:6.5px" width="9.4" height="10" viewBox="0 0 9.4 10"><rect x="0.6" y="0.6" width="8.2" height="8.8" rx="0.8" fill="none" stroke="#e4e4e4" stroke-width="1.2"/><path d="M3.4 2.6H6.2V4.8H4.6V7.2H6.4" stroke="#e4e4e4" stroke-width="1.1" fill="none"/></svg>
<svg class="abs" style="left:1110px;top:7.5px" width="10.4" height="8.4" viewBox="0 0 10.4 8.4"><path d="M0.6 2.6A6.6 6.6 0 0 1 9.8 2.6" stroke="#e4e4e4" stroke-width="1.2" fill="none"/><path d="M2.2 4.4A4.3 4.3 0 0 1 8.2 4.4" stroke="#e4e4e4" stroke-width="1.2" fill="none"/><path d="M3.7 6.1A2.2 2.2 0 0 1 6.7 6.1L5.2 7.9Z" fill="#e4e4e4"/></svg>
<svg class="abs" style="left:1126.5px;top:6.1px" width="10" height="11" viewBox="0 0 10 11"><rect x="0.8" y="1.6" width="7" height="8.6" rx="0.8" fill="none" stroke="#e4e4e4" stroke-width="1.2"/><rect x="2.6" y="0.4" width="3.4" height="2" fill="#e4e4e4"/><path d="M2.4 4.6H6.2M2.4 6.4H6.2M2.4 8.2H4.6" stroke="#e4e4e4" stroke-width="0.9"/><circle cx="7.6" cy="8.6" r="1.8" fill="#2d2d2d" stroke="#e4e4e4" stroke-width="0.8"/></svg>
<div class="abs" style="left:1142px;top:5.9px;font-size:8.8px;font-weight:bold;line-height:12px;color:#f0f0f0;letter-spacing:-0.45px">19:04</div>
<svg class="abs" style="left:1166.5px;top:6.7px" width="10" height="10" viewBox="0 0 10 10"><path d="M0.3 3.4H2.2L4.8 0.8V9.2L2.2 6.6H0.3Z" fill="#e4e4e4"/><path d="M6 2.8Q7 5 6 7.2M7.6 1.6Q9.4 5 7.6 8.4" stroke="#e4e4e4" stroke-width="1" fill="none"/></svg>
<div class="abs" style="left:1183px;top:5.1px;width:14.4px;height:11.6px;background:#5a9ccc;border-radius:1px;border-top:2.2px solid #4a88b8"></div>
</div>
</body>
</html>
